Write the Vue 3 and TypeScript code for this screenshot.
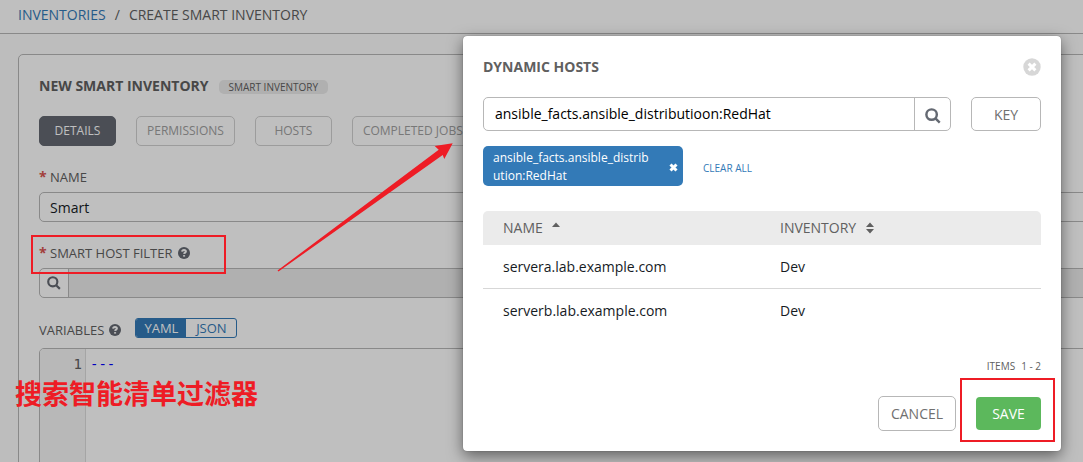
<script setup lang="ts">
import { ref } from 'vue'

interface Host {
  name: string
  inventory: string
}

const tabs = ['DETAILS', 'PERMISSIONS', 'HOSTS', 'COMPLETED JOBS']
const activeTab = ref('DETAILS')
const format = ref('YAML')
const name = ref('Smart')
const hostFilter = ref('')
const variables = ref('---')
const query = ref('ansible_facts.ansible_distributioon:RedHat')
const tags = ref(['ansible_facts.ansible_distribution:RedHat'])
const hosts: Host[] = [
  { name: 'servera.lab.example.com', inventory: 'Dev' },
  { name: 'serverb.lab.example.com', inventory: 'Dev' },
]
</script>

<template>
  <div class="page">
    <nav class="breadcrumb" aria-label="Breadcrumb">
      <a href="#">INVENTORIES</a>
      <span>/</span>
      <span>CREATE SMART INVENTORY</span>
    </nav>

    <main class="panel">
      <header class="panel-head">
        <h1>NEW SMART INVENTORY</h1>
        <span class="badge">SMART INVENTORY</span>
      </header>

      <div class="tabs">
        <button
          v-for="tab in tabs"
          :key="tab"
          type="button"
          class="tab"
          :class="{ active: tab === activeTab }"
          @click="activeTab = tab"
        >{{ tab }}</button>
      </div>

      <div class="field">
        <label for="name"><span class="required">*</span>NAME</label>
        <input id="name" v-model="name" class="text-input" type="text">
      </div>

      <div class="field">
        <label for="host-filter">
          <span class="required">*</span>SMART HOST FILTER
          <svg class="help" viewBox="0 0 12 12" aria-hidden="true">
            <circle cx="6" cy="6" r="6" />
            <path d="M4.1 4.6C4.2 3.4 5 2.9 6 2.9c1.1 0 1.9.6 1.9 1.5C7.9 5.6 6.2 5.6 6.1 6.9" />
            <path d="M6.1 8.1v1.5" />
          </svg>
        </label>
        <div class="lookup">
          <button type="button" aria-label="Search hosts">
            <svg class="magnifier small" viewBox="0 0 15 15" aria-hidden="true">
              <circle cx="6.2" cy="6.2" r="4.9" />
              <path d="M9.8 9.8l4 4" />
            </svg>
          </button>
          <input id="host-filter" v-model="hostFilter" type="text" readonly>
        </div>
      </div>

      <div class="variables-head">
        <label for="variables">
          VARIABLES
          <svg class="help" viewBox="0 0 12 12" aria-hidden="true">
            <circle cx="6" cy="6" r="6" />
            <path d="M4.1 4.6C4.2 3.4 5 2.9 6 2.9c1.1 0 1.9.6 1.9 1.5C7.9 5.6 6.2 5.6 6.1 6.9" />
            <path d="M6.1 8.1v1.5" />
          </svg>
        </label>
        <div class="toggle">
          <button
            v-for="kind in ['YAML', 'JSON']"
            :key="kind"
            type="button"
            :class="{ on: kind === format }"
            @click="format = kind"
          >{{ kind }}</button>
        </div>
      </div>
      <div class="editor">
        <div class="gutter">1</div>
        <textarea id="variables" v-model="variables" spellcheck="false"></textarea>
      </div>
    </main>

    <div class="backdrop">
      <section class="dialog" role="dialog" aria-labelledby="dialog-title">
        <header class="dialog-head">
          <h2 id="dialog-title">DYNAMIC HOSTS</h2>
          <button type="button" class="close" aria-label="Close">
            <svg viewBox="0 0 18 18" aria-hidden="true">
              <circle cx="9" cy="9" r="8.7" />
              <path d="M5.6 5.6l6.8 6.8M12.4 5.6l-6.8 6.8" />
            </svg>
          </button>
        </header>

        <div class="search-row">
          <div class="search">
            <input v-model="query" type="text" aria-label="Search">
            <button type="button" aria-label="Search">
              <svg class="magnifier" viewBox="0 0 15 15" aria-hidden="true">
                <circle cx="6.2" cy="6.2" r="4.9" />
                <path d="M9.8 9.8l4 4" />
              </svg>
            </button>
          </div>
          <button type="button" class="outline key">KEY</button>
        </div>

        <div class="tag-row">
          <div v-for="tag in tags" :key="tag" class="tag">
            <span>{{ tag }}</span>
            <button type="button" aria-label="Remove filter">
              <svg viewBox="0 0 9 9" aria-hidden="true">
                <path d="M1.5 1.5l6 6M7.5 1.5l-6 6" />
              </svg>
            </button>
          </div>
          <a href="#" class="clear">CLEAR ALL</a>
        </div>

        <table class="hosts">
          <thead>
            <tr>
              <th scope="col">
                NAME
                <svg class="sort" viewBox="0 0 10 14" aria-hidden="true">
                  <path d="M1 6L5 1.5L9 6z" />
                </svg>
              </th>
              <th scope="col">
                INVENTORY
                <svg class="sort" viewBox="0 0 10 14" aria-hidden="true">
                  <path d="M1 6L5 1.5L9 6zM1 8L5 12.5L9 8z" />
                </svg>
              </th>
            </tr>
          </thead>
          <tbody>
            <tr v-for="host in hosts" :key="host.name">
              <td>{{ host.name }}</td>
              <td>{{ host.inventory }}</td>
            </tr>
          </tbody>
        </table>

        <div class="count"><span>ITEMS</span><span>1 - 2</span></div>

        <footer class="actions">
          <button type="button" class="outline cancel">CANCEL</button>
          <button type="button" class="save">SAVE</button>
        </footer>
      </section>
    </div>

    <svg class="arrow" viewBox="0 0 178 130" aria-hidden="true">
      <path d="M0.5 128.5L161.7 7.7L157.7 4L175.7 1.3L167.3 17L165.7 13L1.5 129.5z" />
    </svg>
    <div class="mark mark-filter"></div>
    <div class="mark mark-save"></div>
    <p class="note">搜索智能清单过滤器</p>
  </div>
</template>

<style>
body {
  margin: 0;
}
</style>

<style scoped>
.page,
.page * {
  box-sizing: border-box;
}

.page {
  position: relative;
  height: 100vh;
  overflow: hidden;
  background: #fcfcfc;
  color: #606060;
  font: 14px/20px "Open Sans", "Noto Sans", sans-serif;
}

button,
input,
textarea {
  margin: 0;
  padding: 0;
  border: 0;
  background: none;
  color: inherit;
  font: inherit;
}

button {
  cursor: pointer;
}

input,
textarea {
  min-width: 0;
  outline: 0;
}

a {
  color: #337ab7;
  text-decoration: none;
}

h1,
h2 {
  margin: 0;
  font-size: 14px;
  line-height: 20px;
  font-weight: 700;
}

.breadcrumb {
  display: flex;
  gap: 9px;
  height: 34px;
  padding: 5px 18px;
  border-bottom: 1px solid #b7b7b7;
  background: #fff;
}

.panel {
  margin: 20px -40px 0 18px;
  padding: 21px 20px 20px;
  border: 1px solid #b7b7b7;
  border-radius: 5px;
  background: #fff;
}

.panel-head {
  display: flex;
  align-items: center;
  gap: 10px;
}

.badge {
  margin-top: 1px;
  padding: 0 10px;
  border-radius: 5px;
  background: #ebebeb;
  font-size: 10px;
  line-height: 14px;
}

.tabs {
  display: flex;
  gap: 20px;
  margin-top: 20px;
}

.tab {
  min-width: 77px;
  height: 30px;
  padding: 0 10px;
  border: 1px solid #d0d0d0;
  border-radius: 5px;
  color: #a0a0a0;
  font-size: 12px;
}

.tab.active {
  border-color: #646972;
  background: #646972;
  color: #fff;
}

.field {
  margin-top: 23px;
}

.field label,
.variables-head label {
  display: flex;
  align-items: center;
  font-size: 13px;
  line-height: 16px;
}

.required {
  width: 11px;
  color: #d9534f;
  font-size: 14px;
  font-weight: 700;
}

.help {
  width: 12px;
  height: 12px;
  margin-left: 5px;
  fill: #646972;
}

.help path {
  fill: none;
  stroke: #fff;
  stroke-width: 2;
}

.text-input {
  display: block;
  width: 100%;
  height: 30px;
  margin-top: 7px;
  padding: 0 10px;
  border: 1px solid #b7b7b7;
  border-radius: 5px;
  color: #161b1f;
}

.lookup {
  display: flex;
  height: 30px;
  margin-top: 7px;
  overflow: hidden;
  border: 1px solid #b7b7b7;
  border-radius: 5px;
}

.lookup button {
  display: grid;
  place-items: center;
  width: 29px;
  border-right: 1px solid #b7b7b7;
}

.lookup input {
  flex: 1;
  background: #ebebeb;
}

.magnifier {
  width: 16px;
  height: 16px;
  fill: none;
  stroke: #646972;
  stroke-width: 2.3;
}

.magnifier.small {
  width: 14px;
  height: 14px;
}

.variables-head {
  display: flex;
  align-items: flex-end;
  gap: 14px;
  margin-top: 20px;
}

.toggle {
  display: flex;
  height: 20px;
  overflow: hidden;
  border: 1px solid #337ab7;
  border-radius: 3px;
}

.toggle button {
  width: 50px;
  color: #337ab7;
  font-size: 13px;
  line-height: 18px;
}

.toggle .on {
  background: #337ab7;
  color: #fff;
}

.editor {
  display: flex;
  height: 200px;
  margin-top: 10px;
  overflow: hidden;
  border: 1px solid #b7b7b7;
  border-radius: 5px;
  font: 14px/20px "DejaVu Sans Mono", monospace;
}

.gutter {
  width: 46px;
  padding: 5px 3px;
  border-right: 1px solid #ddd;
  background: #f6f6f6;
  text-align: right;
}

.editor textarea {
  flex: 1;
  padding: 5px 4px;
  color: #0000ff;
  resize: none;
}

.backdrop {
  position: absolute;
  inset: 0;
  display: flex;
  align-items: flex-start;
  justify-content: flex-end;
  padding: 36px 22px 11px;
  background: rgba(0, 0, 0, 0.25);
}

.dialog {
  width: 100%;
  max-width: 598px;
  padding: 21px 20px 20px;
  border-radius: 4px;
  background: #fff;
  box-shadow: 0 5px 15px rgba(0, 0, 0, 0.5), 0 0 1px rgba(0, 0, 0, 0.5);
}

.dialog-head {
  display: flex;
  align-items: center;
  justify-content: space-between;
}

.close,
.close svg {
  display: block;
  width: 18px;
  height: 18px;
}

.close circle {
  fill: #d7d7d7;
}

.close path {
  stroke: #fff;
  stroke-width: 3;
}

.search-row {
  display: flex;
  gap: 20px;
  height: 34px;
  margin-top: 20px;
}

.search {
  display: flex;
  flex: 1;
  border: 1px solid #b7b7b7;
  border-radius: 5px;
}

.search input {
  flex: 1;
  padding: 0 11px;
  color: #000;
}

.search button {
  display: grid;
  place-items: center;
  width: 36px;
  padding-top: 4px;
  border-left: 1px solid #b7b7b7;
}

.outline {
  border: 1px solid #b7b7b7;
  border-radius: 5px;
  color: #707070;
}

.key {
  width: 70px;
  padding-top: 2px;
}

.tag-row {
  display: flex;
  align-items: center;
  gap: 20px;
  margin-top: 15px;
}

.tag {
  display: flex;
  align-items: center;
  justify-content: space-between;
  width: 200px;
  padding: 3px 5px 1px 10px;
  border-radius: 5px;
  background: #337ab7;
  color: #fff;
  font-size: 12px;
  line-height: 18px;
}

.tag span {
  width: 160px;
  word-break: break-all;
}

.tag button,
.tag svg {
  display: block;
  width: 9px;
  height: 9px;
}

.tag path {
  stroke: #fff;
  stroke-width: 3;
}

.clear {
  padding-top: 3px;
  font-size: 10px;
}

.hosts {
  width: 100%;
  margin-top: 25px;
  border-spacing: 0;
  table-layout: fixed;
}

.hosts th {
  height: 34px;
  padding: 0 20px;
  background: #ebebeb;
  font-weight: 400;
  text-align: left;
}

.hosts th:first-child {
  border-radius: 5px 0 0 0;
}

.hosts th:last-child {
  border-radius: 0 5px 0 0;
}

.hosts td {
  height: 44px;
  padding: 0 20px;
  color: #161b1f;
}

.hosts th:last-child,
.hosts td:last-child {
  padding-left: 18px;
}

.hosts tbody tr:not(:last-child) td {
  border-bottom: 1px solid #d7d7d7;
}

.sort {
  width: 10px;
  height: 14px;
  margin-left: 5px;
  vertical-align: -2px;
  fill: #606060;
}

.count {
  display: flex;
  justify-content: flex-end;
  gap: 6px;
  margin-top: 23px;
  font-size: 10px;
}

.actions {
  display: flex;
  align-items: center;
  justify-content: flex-end;
  gap: 20px;
  margin-top: 20px;
}

.cancel {
  width: 78px;
  height: 35px;
}

.save {
  width: 65px;
  height: 33px;
  border-radius: 4px;
  background: #5cb85c;
  color: #fff;
}

.arrow {
  position: absolute;
  left: 277px;
  top: 142px;
  width: 178px;
  height: 130px;
  fill: #ee1c25;
  pointer-events: none;
}

.mark {
  position: absolute;
  border: 2px solid #ee1c25;
  pointer-events: none;
}

.mark-filter {
  left: 31px;
  top: 235px;
  width: 195px;
  height: 39px;
}

.mark-save {
  left: 960px;
  top: 378px;
  width: 95px;
  height: 64px;
}

.note {
  position: absolute;
  left: 15px;
  top: 373px;
  margin: 0;
  color: #ee1c25;
  font: 700 27px/40px "Noto Sans CJK SC", sans-serif;
  pointer-events: none;
}
</style>
